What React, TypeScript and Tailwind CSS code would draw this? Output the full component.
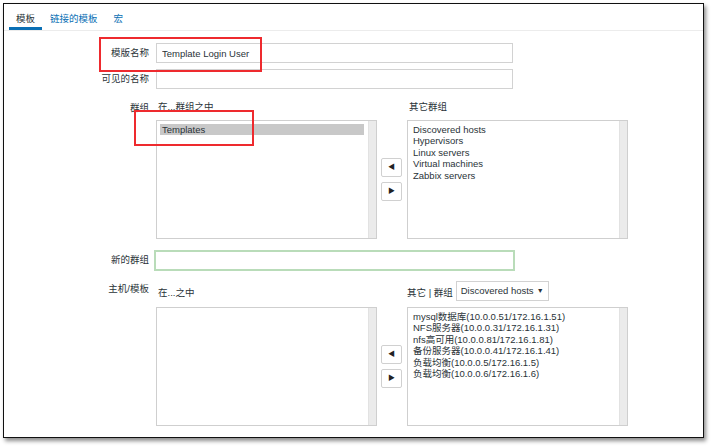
import { useState } from "react";

const font = "font-['Liberation_Sans','Noto_Sans_CJK_SC',sans-serif]";

function ListBox({ items, selected }: { items: string[]; selected?: string }) {
  return (
    <div className="flex w-[221px] h-[119px] border border-[#cfcfcf] bg-white">
      <div className="flex-1 pt-[3px] pl-[3px] pr-[4px]">
        {items.map((item) => (
          <div
            key={item}
            className={`h-[11.4px] leading-[11.4px] pl-[2px] text-[9.5px] text-[#2a3338] whitespace-nowrap ${
              item === selected ? "bg-[#c8c8c8]" : ""
            }`}
          >
            {item}
          </div>
        ))}
      </div>
      <div className="w-[8px] bg-[#ebebeb] border-l border-[#e2e2e2]" />
    </div>
  );
}

function MoveButtons() {
  return (
    <div className="flex flex-col gap-[5px] w-[22px] mx-[4px]">
      <button className="h-[19px] w-[21px] flex items-center justify-center border border-[#d0d0d0] rounded-[2px] bg-white text-[7px] text-[#222]">
        ◀
      </button>
      <button className="h-[19px] w-[21px] flex items-center justify-center border border-[#d0d0d0] rounded-[2px] bg-white text-[7px] text-[#222]">
        ▶
      </button>
    </div>
  );
}

export default function App() {
  const [tab] = useState("template");
  const hosts = [
    "mysql数据库(10.0.0.51/172.16.1.51)",
    "NFS服务器(10.0.0.31/172.16.1.31)",
    "nfs高可用(10.0.0.81/172.16.1.81)",
    "备份服务器(10.0.0.41/172.16.1.41)",
    "负载均衡(10.0.0.5/172.16.1.5)",
    "负载均衡(10.0.0.6/172.16.1.6)",
  ];
  const groups = [
    "Discovered hosts",
    "Hypervisors",
    "Linux servers",
    "Virtual machines",
    "Zabbix servers",
  ];

  return (
    <div className={`w-[712px] h-[448px] bg-white ${font}`}>
      <div className="ml-[3px] mt-[3px] w-[701px] h-[435px] border-[1.5px] border-[#111] bg-white shadow-[2px_3px_4px_rgba(0,0,0,0.45)] overflow-hidden">
        {/* Tabs */}
        <div className="flex h-[27px] border-b border-[#ececec] pl-[5px]">
          <div
            className={`px-[7px] pt-[8px] text-[9.5px] text-[#2a3338] border-b-[3px] ${
              tab === "template" ? "border-[#0a6fb4]" : "border-transparent"
            }`}
          >
            模板
          </div>
          <div className="px-[8px] pt-[8px] text-[9.5px] text-[#0a6fb4]">链接的模板</div>
          <div className="px-[8px] pt-[8px] text-[9.5px] text-[#0a6fb4]">宏</div>
        </div>

        {/* Form */}
        <div className="pt-[12px] text-[9.5px] text-[#2a3338]">
          <div className="flex items-center h-[20px]">
            <div className="w-[152px] pr-[7px] text-right">模版名称</div>
            <div className="relative">
              <input
                defaultValue="Template Login User"
                className="w-[357px] h-[20px] border border-[#d2d2d2] px-[5px] text-[9.5px] text-[#2a3338] outline-none"
              />
              <div className="absolute left-[-57px] top-[-6px] w-[163px] h-[35px] border-2 border-[#ee2a2e] pointer-events-none" />
            </div>
          </div>
          <div className="flex items-center h-[20px] mt-[6px]">
            <div className="w-[152px] pr-[7px] text-right">可见的名称</div>
            <input className="w-[357px] h-[20px] border border-[#d2d2d2] px-[5px] outline-none" />
          </div>

          {/* Groups */}
          <div className="flex mt-[11px]">
            <div className="w-[152px] pr-[7px] text-right pt-[1px]">群组</div>
            <div className="flex flex-col">
              <div className="flex h-[15px] pl-[2px]">
                <div className="w-[251px]">在...群组之中</div>
                <div>其它群组</div>
              </div>
              <div className="flex items-center mt-[5px]">
                <div className="relative">
                  <ListBox items={["Templates"]} selected="Templates" />
                  <div className="absolute left-[-22px] top-[-10px] w-[120px] h-[36px] border-2 border-[#ee2a2e] pointer-events-none" />
                </div>
                <MoveButtons />
                <ListBox items={groups} />
              </div>
            </div>
          </div>

          {/* New group */}
          <div className="flex items-center mt-[11px]">
            <div className="w-[152px] pr-[7px] text-right">新的群组</div>
            <input className="ml-[-2px] w-[361px] h-[21px] border-2 border-[#b9dcb9] outline-none" />
          </div>

          {/* Hosts / templates */}
          <div className="flex mt-[10px]">
            <div className="w-[152px] pr-[7px] text-right pt-[1px]">主机/模板</div>
            <div className="flex flex-col">
              <div className="flex items-end h-[20px] pl-[2px]">
                <div className="w-[249px] pb-[1px]">在...之中</div>
                <div className="pb-[1px]">其它 | 群组</div>
                <div className="ml-[3px] w-[93px] h-[20px] border border-[#d2d2d2] flex items-center justify-between px-[4px]">
                  <span>Discovered hosts</span>
                  <span className="text-[7px]">▼</span>
                </div>
              </div>
              <div className="flex items-center mt-[6px]">
                <ListBox items={[]} />
                <MoveButtons />
                <ListBox items={hosts} />
              </div>
            </div>
          </div>
        </div>
      </div>
    </div>
  );
}
